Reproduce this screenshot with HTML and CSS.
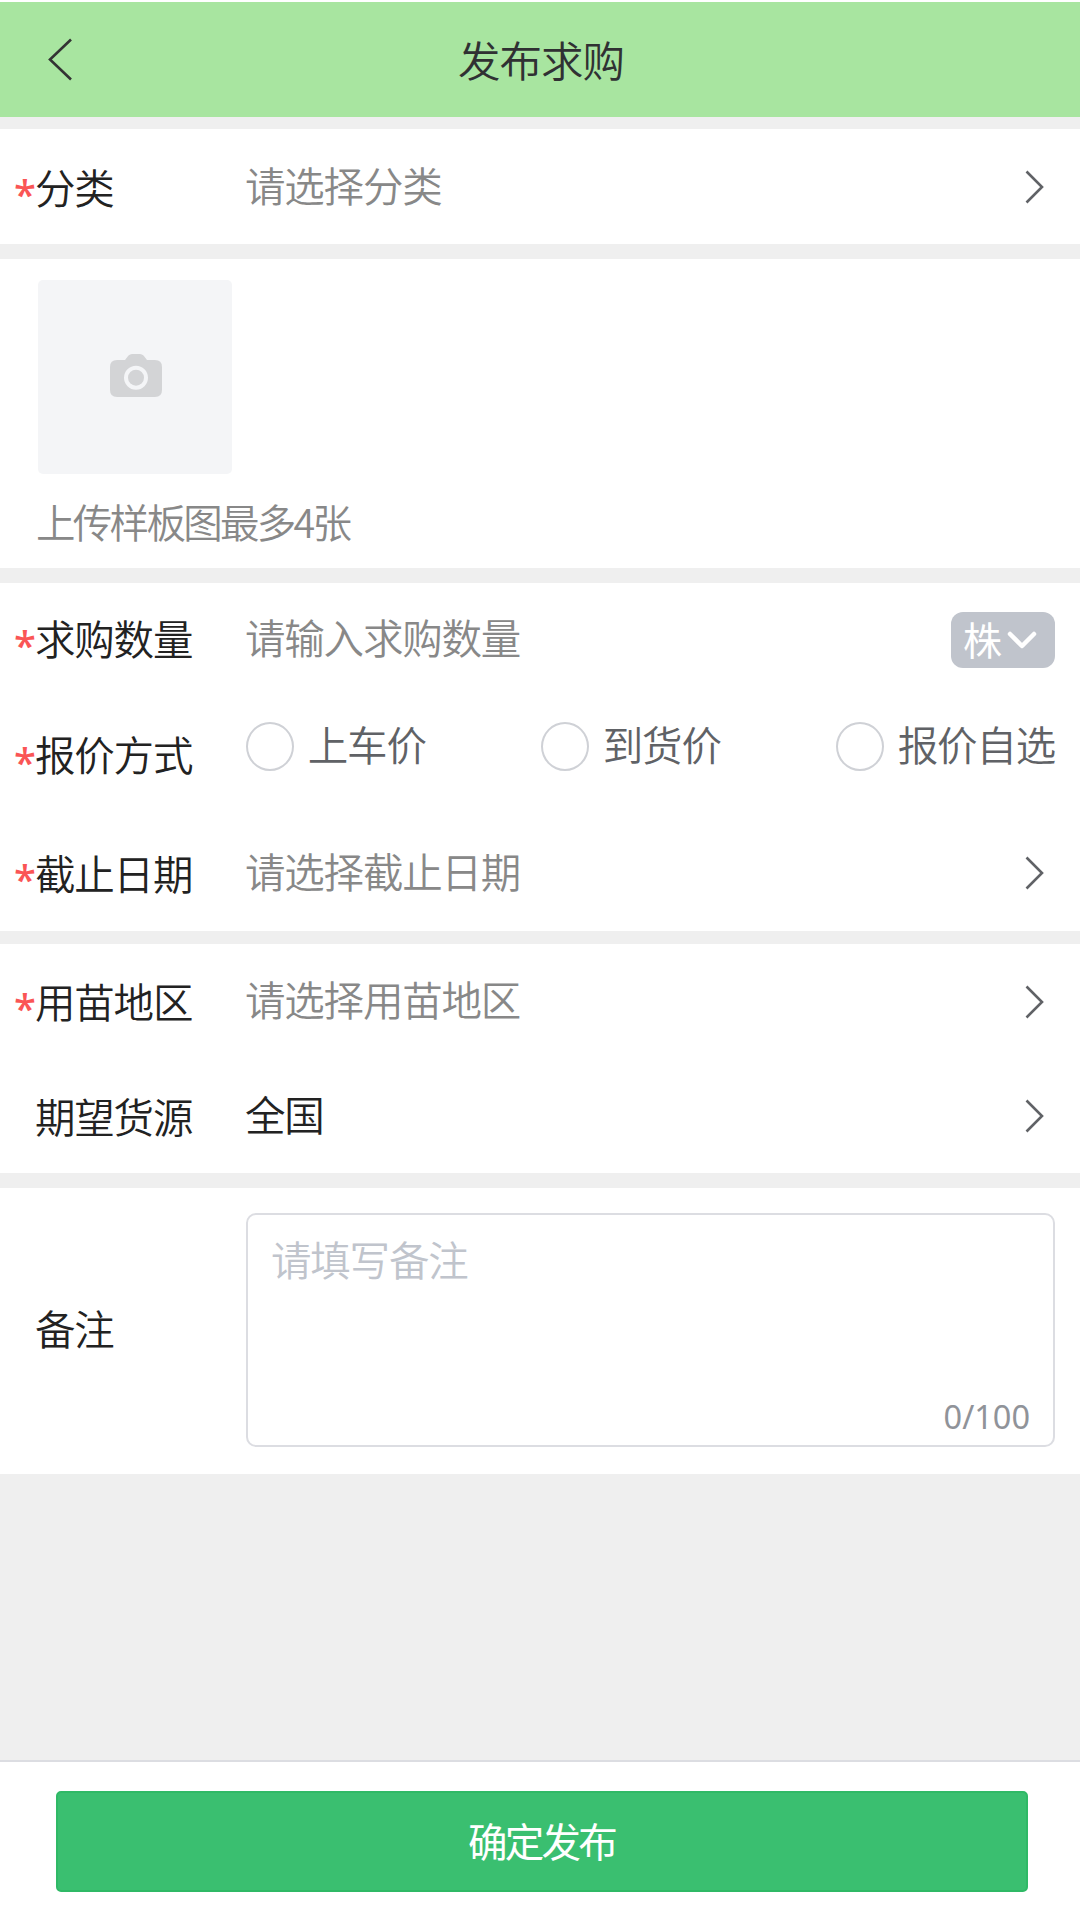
FILE: index.html
```html
<!DOCTYPE html>
<html lang="zh-CN">
<head>
<meta charset="utf-8">
<title>发布求购</title>
<link rel="stylesheet" href="styles.css">
</head>
<body>
<div class="page">
  <header class="header">
    <svg class="back" viewBox="0 0 24 43"><path d="M23 1.500 2 21.500l21 20"/></svg>
    <h1 class="title">发布求购</h1>
  </header>

  <main class="form">
    <section class="section">
      <div class="row row-category">
        <span class="star">*</span><span class="label">分类</span>
        <span class="value placeholder">请选择分类</span>
        <svg class="arrow" viewBox="0 0 20 34"><path d="M1.5 1.5 17 17 1.5 32.5"/></svg>
      </div>
    </section>

    <section class="section upload">
      <div class="upload-box">
        <svg class="camera" viewBox="0 0 52 43">
          <path fill-rule="evenodd" d="M7 6h8l3.5-4.500Q20 0 22 0h8q2 0 3.500 1.500L37 6h8q7 0 7 7v23q0 7-7 7H7q-7 0-7-7V13q0-7 7-7ZM26 11.700a12 12 0 1 0 0 24 12 12 0 1 0 0-24Z"/>
          <circle cx="26" cy="23.700" r="8"/>
        </svg>
      </div>
      <p class="upload-tip">上传样板图最多4张</p>
    </section>

    <section class="section">
      <div class="row row-amount">
        <span class="star">*</span><span class="label">求购数量</span>
        <span class="value placeholder">请输入求购数量</span>
        <span class="unit"><span class="unit-text">株</span><svg class="unit-arrow" viewBox="0 0 30 18"><path d="M3 3l12 12L27 3"/></svg></span>
      </div>
      <div class="row row-quote">
        <span class="star">*</span><span class="label">报价方式</span>
        <div class="radios">
          <label class="radio"><i class="dot"></i><span class="radio-text">上车价</span></label>
          <label class="radio"><i class="dot"></i><span class="radio-text">到货价</span></label>
          <label class="radio"><i class="dot"></i><span class="radio-text">报价自选</span></label>
        </div>
      </div>
      <div class="row row-date">
        <span class="star">*</span><span class="label">截止日期</span>
        <span class="value placeholder">请选择截止日期</span>
        <svg class="arrow" viewBox="0 0 20 34"><path d="M1.5 1.5 17 17 1.5 32.5"/></svg>
      </div>
    </section>

    <section class="section">
      <div class="row row-area">
        <span class="star">*</span><span class="label">用苗地区</span>
        <span class="value placeholder">请选择用苗地区</span>
        <svg class="arrow" viewBox="0 0 20 34"><path d="M1.5 1.5 17 17 1.5 32.5"/></svg>
      </div>
      <div class="row row-source">
        <span class="star"></span><span class="label">期望货源</span>
        <span class="value">全国</span>
        <svg class="arrow" viewBox="0 0 20 34"><path d="M1.5 1.5 17 17 1.5 32.5"/></svg>
      </div>
    </section>

    <section class="section">
      <div class="row row-remark">
        <span class="star"></span><span class="label">备注</span>
        <div class="textarea">
          <span class="hint">请填写备注</span>
          <span class="count">0/100</span>
        </div>
      </div>
    </section>
  </main>

  <footer class="footer">
    <button class="submit" type="button">确定发布</button>
  </footer>
</div>
</body>
</html>
```
FILE: styles.css
```css
* { box-sizing: border-box; }

body {
  margin: 0;
  background: #efefef;
  color: #222;
  font-family: "Noto Sans CJK SC", sans-serif;
  font-size: 40.5px;
  font-weight: 350;
  letter-spacing: -1.2px;
  line-height: 56px;
}

.page {
  display: flex;
  flex-direction: column;
  width: 1080px;
  height: 1920px;
  border-top: 2px solid #fff;
}

.header {
  display: grid;
  grid-template-columns: 120px 1fr 118px;
  align-items: center;
  height: 115px;
  background: #a8e5a0;
}

.back {
  width: 24px;
  height: 43px;
  margin-left: 48px;
}

.back path,
.arrow path {
  fill: none;
  stroke: #333;
  stroke-width: 2.6;
}

.title {
  margin: 0;
  padding-bottom: 2px;
  color: #303133;
  font-size: 42.5px;
  font-weight: 350;
  letter-spacing: -1px;
  text-align: center;
}

.form {
  display: flex;
  flex: 1;
  flex-direction: column;
  gap: 15px;
  padding-top: 12px;
}

.section { background: #fff; }

.row {
  display: flex;
  align-items: center;
  padding: 0 25px 0 14px;
}

.row-category, .row-area { height: 115px; }
.row-amount { height: 114px; }
.row-quote { height: 118px; }
.row-date { height: 116px; }
.row-source { height: 114px; }
.row-remark { height: 286px; }

.section:nth-child(3) { margin-bottom: -2px; }

.star {
  width: 21px;
  padding-top: 12px;
  color: #fa5555;
  font-family: "Noto Sans", sans-serif;
  font-size: 40px;
  font-weight: 500;
}

.label {
  width: 210px;
  padding-bottom: 1px;
}

.value {
  flex: 1;
  padding-bottom: 4px;
}

.row-category .star { padding-top: 15px; }
.row-category .label { padding-top: 2px; }
.row-category .value { padding-bottom: 3px; }
.row-amount .star { padding-top: 10px; }
.row-amount .label { padding-bottom: 4px; }
.row-amount .value { padding-bottom: 7px; }
.row-quote .label { padding-bottom: 4px; }
.row-area .value { padding-bottom: 5px; }
.row-remark .label { padding-bottom: 6px; }

.placeholder { color: #888; }

.arrow {
  width: 20px;
  height: 34px;
  margin-right: 10px;
}

.arrow path { stroke: #606266; }

.upload {
  height: 309px;
  padding: 21px 37px 0 38px;
}

.upload-box {
  display: flex;
  align-items: center;
  justify-content: center;
  width: 194px;
  height: 194px;
  border-radius: 5px;
  background: #f4f5f7;
}

.camera {
  width: 52px;
  height: 43px;
  margin: 0 0 4px 1px;
  fill: #d3d4d6;
}

.upload-tip {
  margin: 19px 0 0 -2px;
  color: #888;
  font-size: 39.5px;
  letter-spacing: -2.7px;
}

.unit {
  display: flex;
  align-items: center;
  gap: 5px;
  width: 104px;
  height: 56px;
  padding-left: 12px;
  border-radius: 12px;
  background: #c0c4cc;
  color: #fff;
  font-size: 39px;
  font-weight: 400;
  letter-spacing: 0;
}

.unit-text { padding-bottom: 4px; }

.unit-arrow {
  width: 30px;
  height: 18px;
}

.unit-arrow path {
  fill: none;
  stroke: #fff;
  stroke-width: 4.5;
  stroke-linecap: round;
  stroke-linejoin: round;
}

.radios {
  display: grid;
  grid-template-columns: 295px 295px auto;
  margin: 0 0 20px 1px;
  color: #606266;
  white-space: nowrap;
}

.radio {
  display: flex;
  align-items: center;
  gap: 14px;
}

.radio-text { padding-bottom: 4px; }

.dot {
  width: 48px;
  height: 49px;
  border: 2px solid #cfd1d6;
  border-radius: 50%;
}

.textarea {
  display: flex;
  flex-direction: column;
  justify-content: space-between;
  width: 809px;
  height: 234px;
  margin: 0 0 2px 1px;
  padding: 16px 23px 0 24px;
  border: 2px solid #dcdde2;
  border-radius: 10px;
}

.hint {
  margin-left: -1px;
  color: #c0c4cc;
}

.count {
  align-self: flex-end;
  color: #909399;
  font-family: "Noto Sans", sans-serif;
  font-size: 32.5px;
  font-weight: 400;
  letter-spacing: 0;
}

.footer {
  height: 160px;
  padding: 29px 52px 0 56px;
  border-top: 2px solid #dcdde2;
  background: #fff;
}

.submit {
  display: block;
  width: 972px;
  height: 101px;
  padding: 0 1px 3px 0;
  border: 2px solid #2fb966;
  border-radius: 5px;
  background: #3abf70;
  color: #fff;
  font: 400 39.5px/56px "Noto Sans CJK SC", sans-serif;
  letter-spacing: -2.8px;
}
```
